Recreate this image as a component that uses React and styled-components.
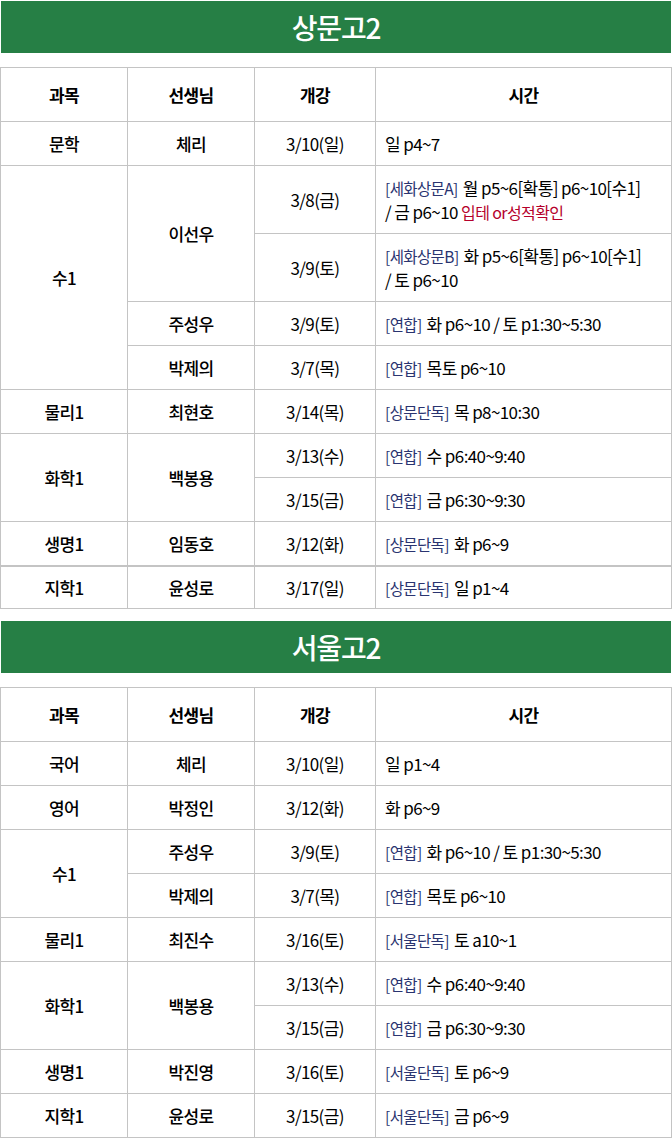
import React from 'react';
import styled, { createGlobalStyle } from 'styled-components';

const GlobalStyle = createGlobalStyle`
  body {
    margin: 0;
    background: #fff;
    font-family: "Noto Sans CJK KR", "Noto Sans", sans-serif;
    color: #000;
  }
`;

const Page = styled.div`
  width: 672px;
  display: flex;
  flex-direction: column;
`;

const Section = styled.section`
  display: flex;
  flex-direction: column;
  gap: 14px;
  margin-bottom: 11px;
`;

const Banner = styled.h1`
  margin: 1px 1px 0;
  height: 52px;
  background: #267f45;
  color: #fff;
  font-size: 28px;
  font-weight: 500;
  letter-spacing: -1.2px;
  display: flex;
  align-items: center;
  justify-content: center;
`;

const Table = styled.table`
  width: 671px;
  table-layout: fixed;
  border-collapse: collapse;
  font-size: 17px;
  letter-spacing: -0.6px;
`;

const Th = styled.th`
  height: 53px;
  border: 1px solid #c4c4c4;
  font-weight: 700;
  font-size: 17px;
  padding: 0;
`;

const Td = styled.td`
  height: ${p => (p.$tall ? 67 : p.$thick ? 41 : 43)}px;
  border: 1px solid #c4c4c4;
  border-top-width: ${p => (p.$thick ? 2 : 1)}px;
  text-align: ${p => (p.$left ? 'left' : 'center')};
  padding: ${p => (p.$left ? '0 6px 0 9px' : '0')};
  font-weight: ${p => (p.$strong ? 500 : 400)};
  line-height: 24px;
  white-space: nowrap;
`;

const Tag = styled.span`
  color: #2a3470;
  font-size: 15.5px;
  font-weight: 400;
  margin-right: 5px;
`;

const Note = styled.span`
  color: #b5002b;
  font-size: 16px;
  font-weight: 400;
`;

const Time = ({ tag, children }) => (
  <>
    {tag && <Tag>[{tag}]</Tag>}
    {children}
  </>
);

const Header = () => (
  <thead>
    <tr>
      <Th>과목</Th>
      <Th>선생님</Th>
      <Th>개강</Th>
      <Th>시간</Th>
    </tr>
  </thead>
);

const Row = ({ subject, teacher, date, children, tall, thick, sRows, tRows }) => (
  <tr>
    {subject && (
      <Td $strong $thick={thick} rowSpan={sRows}>
        {subject}
      </Td>
    )}
    {teacher && (
      <Td $strong $thick={thick} rowSpan={tRows}>
        {teacher}
      </Td>
    )}
    <Td $tall={tall} $thick={thick}>{date}</Td>
    <Td $left $tall={tall} $thick={thick}>{children}</Td>
  </tr>
);

const widths = [127, 127, 121, 296];

const Cols = () => (
  <colgroup>
    {widths.map((w, i) => (
      <col key={i} style={{ width: w }} />
    ))}
  </colgroup>
);

export default function App() {
  return (
    <Page>
      <GlobalStyle />
      <Section>
        <Banner>상문고2</Banner>
        <Table>
          <Cols />
          <Header />
          <tbody>
            <Row subject="문학" teacher="체리" date="3/10(일)">일 p4~7</Row>
            <Row subject="수1" sRows={4} teacher="이선우" tRows={2} date="3/8(금)" tall>
              <Time tag="세화상문A">월 p5~6[확통] p6~10[수1]</Time>
              <br />/ 금 p6~10 <Note>입테 or성적확인</Note>
            </Row>
            <Row date="3/9(토)" tall>
              <Time tag="세화상문B">화 p5~6[확통] p6~10[수1]</Time>
              <br />/ 토 p6~10
            </Row>
            <Row teacher="주성우" date="3/9(토)">
              <Time tag="연합">화 p6~10 / 토 p1:30~5:30</Time>
            </Row>
            <Row teacher="박제의" date="3/7(목)">
              <Time tag="연합">목토 p6~10</Time>
            </Row>
            <Row subject="물리1" teacher="최현호" date="3/14(목)">
              <Time tag="상문단독">목 p8~10:30</Time>
            </Row>
            <Row subject="화학1" sRows={2} teacher="백봉용" tRows={2} date="3/13(수)">
              <Time tag="연합">수 p6:40~9:40</Time>
            </Row>
            <Row date="3/15(금)">
              <Time tag="연합">금 p6:30~9:30</Time>
            </Row>
            <Row subject="생명1" teacher="임동호" date="3/12(화)">
              <Time tag="상문단독">화 p6~9</Time>
            </Row>
            <Row subject="지학1" teacher="윤성로" date="3/17(일)" thick>
              <Time tag="상문단독">일 p1~4</Time>
            </Row>
          </tbody>
        </Table>
      </Section>
      <Section>
        <Banner>서울고2</Banner>
        <Table>
          <Cols />
          <Header />
          <tbody>
            <Row subject="국어" teacher="체리" date="3/10(일)">일 p1~4</Row>
            <Row subject="영어" teacher="박정인" date="3/12(화)">화 p6~9</Row>
            <Row subject="수1" sRows={2} teacher="주성우" date="3/9(토)">
              <Time tag="연합">화 p6~10 / 토 p1:30~5:30</Time>
            </Row>
            <Row teacher="박제의" date="3/7(목)">
              <Time tag="연합">목토 p6~10</Time>
            </Row>
            <Row subject="물리1" teacher="최진수" date="3/16(토)">
              <Time tag="서울단독">토 a10~1</Time>
            </Row>
            <Row subject="화학1" sRows={2} teacher="백봉용" tRows={2} date="3/13(수)">
              <Time tag="연합">수 p6:40~9:40</Time>
            </Row>
            <Row date="3/15(금)">
              <Time tag="연합">금 p6:30~9:30</Time>
            </Row>
            <Row subject="생명1" teacher="박진영" date="3/16(토)">
              <Time tag="서울단독">토 p6~9</Time>
            </Row>
            <Row subject="지학1" teacher="윤성로" date="3/15(금)">
              <Time tag="서울단독">금 p6~9</Time>
            </Row>
          </tbody>
        </Table>
      </Section>
    </Page>
  );
}
